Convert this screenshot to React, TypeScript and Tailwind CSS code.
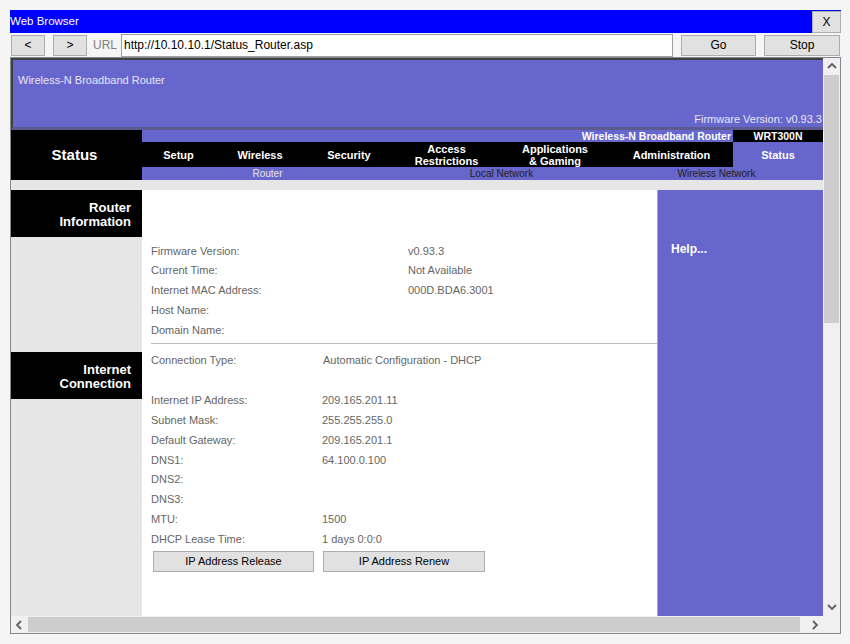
const routerRows: [string, string][] = [
  ['Firmware Version:', 'v0.93.3'],
  ['Current Time:', 'Not Available'],
  ['Internet MAC Address:', '000D.BDA6.3001'],
  ['Host Name:', ''],
  ['Domain Name:', ''],
]

const internetRows: [string, string][] = [
  ['Internet IP Address:', '209.165.201.11'],
  ['Subnet Mask:', '255.255.255.0'],
  ['Default Gateway:', '209.165.201.1'],
  ['DNS1:', '64.100.0.100'],
  ['DNS2:', ''],
  ['DNS3:', ''],
  ['MTU:', '1500'],
  ['DHCP Lease Time:', '1 days 0:0:0'],
]

function Chevron({ dir }: { dir: 'up' | 'down' | 'left' | 'right' }) {
  const pts = {
    up: '1,6 5,2 9,6',
    down: '1,2 5,6 9,2',
    left: '6,1 2,5 6,9',
    right: '3,1 7,5 3,9',
  }[dir]
  return (
    <svg width="10" height="10" viewBox="0 0 10 10">
      <polyline points={pts} fill="none" stroke="#606060" strokeWidth="1.8" />
    </svg>
  )
}

export default function App() {
  return (
    <div className="w-[850px] h-[644px] bg-[#f5f5f5] pt-[10px] pl-[10px] overflow-hidden font-['Liberation_Sans',Arial,sans-serif]">
      <div className="w-[831px] h-[624px] flex flex-col">
        {/* title bar */}
        <div className="h-[23px] bg-[#0000ff] flex items-start justify-between">
          <span className="text-white text-[11.5px] leading-[23px]">Web Browser</span>
          <button className="mt-px w-[29px] h-[22px] bg-[#e1e1e1] border border-[#adadad] text-[12px] leading-none text-black">X</button>
        </div>

        {/* toolbar */}
        <div className="h-[24px] flex items-center text-[12px]">
          <button className="ml-px w-[34px] h-[21px] bg-[#e1e1e1] border border-[#adadad]">&lt;</button>
          <button className="ml-[8px] w-[34px] h-[21px] bg-[#e1e1e1] border border-[#adadad]">&gt;</button>
          <span className="ml-[6px] w-[20px] text-center text-[#808080]">URL</span>
          <div className="ml-[8px] w-[552px] h-[23px] bg-white border border-[#a0a0a0] flex items-center pl-[2px] text-black">
            http://10.10.10.1/Status_Router.asp
          </div>
          <button className="ml-[8px] w-[75px] h-[21px] bg-[#e1e1e1] border border-[#adadad]">Go</button>
          <button className="ml-[8px] w-[76px] h-[21px] bg-[#e1e1e1] border border-[#adadad]">Stop</button>
        </div>

        {/* content frame */}
        <div className="flex-1 border border-[#828790] flex flex-col">
          <div className="flex-1 flex min-h-0">
            {/* page */}
            <div className="w-[812px] overflow-hidden flex flex-col">
              {/* header */}
              <div className="h-[72px] shrink-0 bg-[#6666cc] border-t-2 border-l-2 border-b-[3px] border-[#404040] border-b-[#5b5b8f] flex flex-col justify-between pb-px">
                <div className="pt-[13px] pl-[5px] text-[11px] leading-[14px] text-[#e6e6f5]">Wireless-N Broadband Router</div>
                <div className="text-right pr-px text-[11px] leading-[14px] text-[#e6e6f5] whitespace-nowrap">Firmware Version: v0.93.3</div>
              </div>

              {/* nav */}
              <div className="h-[50px] shrink-0 flex">
                <div className="w-[131px] bg-black text-white font-bold text-[15px] flex items-center justify-center pr-[4px]">Status</div>
                <div className="flex-1 flex flex-col">
                  <div className="h-[12px] flex font-bold text-[10.5px] leading-[12px] text-white">
                    <div className="flex-1 bg-[#6666cc] text-right pr-[2px]">Wireless-N Broadband Router</div>
                    <div className="w-[90px] bg-black text-center">WRT300N</div>
                  </div>
                  <div className="h-[25px] bg-black flex font-bold text-[11px] leading-[12px] text-white text-center">
                    <div className="w-[73px] flex items-center justify-center">Setup</div>
                    <div className="w-[90px] flex items-center justify-center">Wireless</div>
                    <div className="w-[88px] flex items-center justify-center">Security</div>
                    <div className="w-[107px] flex items-center justify-center">Access<br />Restrictions</div>
                    <div className="w-[110px] flex items-center justify-center">Applications<br />&amp; Gaming</div>
                    <div className="w-[123px] flex items-center justify-center">Administration</div>
                    <div className="w-[90px] bg-[#6666cc] flex items-center justify-center">Status</div>
                  </div>
                  <div className="h-[13px] bg-[#6666cc] flex text-[10px] leading-[13px] text-center">
                    <div className="w-[251px] text-[#e6e6e6]">Router</div>
                    <div className="w-[217px] text-[#222]">Local Network</div>
                    <div className="w-[213px] text-[#222]">Wireless Network</div>
                  </div>
                </div>
              </div>

              <div className="h-[10px] shrink-0 bg-[#e6e6e6]" />

              {/* body */}
              <div className="flex-1 flex">
                <div className="w-[131px] bg-[#e6e6e6] flex flex-col">
                  <div className="h-[47px] bg-black text-white font-bold text-[13px] leading-[14px] text-right pr-[11px] pt-[2px] flex flex-col justify-center">
                    <span>Router</span>
                    <span>Information</span>
                  </div>
                  <div className="h-[115px]" />
                  <div className="h-[47px] bg-black text-white font-bold text-[13px] leading-[14px] text-right pr-[11px] pt-[2px] flex flex-col justify-center">
                    <span>Internet</span>
                    <span>Connection</span>
                  </div>
                </div>

                <div className="w-[515px] bg-white pl-[9px] pt-[51px] text-[11px] text-[#666]">
                  {routerRows.map(([k, v]) => (
                    <div key={k} className="h-[19.75px] flex items-center">
                      <span className="w-[257px]">{k}</span>
                      <span>{v}</span>
                    </div>
                  ))}
                  <div className="mt-[3px] h-px bg-[#bdbdbd]" />
                  <div className="mt-[6px] h-[20px] flex items-center">
                    <span className="w-[172px]">Connection Type:</span>
                    <span>Automatic Configuration - DHCP</span>
                  </div>
                  <div className="h-[21px]" />
                  {internetRows.map(([k, v]) => (
                    <div key={k} className="h-[19.75px] flex items-center">
                      <span className="w-[171px]">{k}</span>
                      <span>{v}</span>
                    </div>
                  ))}
                  <div className="mt-[2px] ml-[2px] flex gap-[9px] text-black">
                    <button className="w-[161px] h-[21px] bg-[#e1e1e1] border border-[#adadad]">IP Address Release</button>
                    <button className="w-[162px] h-[21px] bg-[#e1e1e1] border border-[#adadad]">IP Address Renew</button>
                  </div>
                </div>

                <div className="w-[166px] bg-[#6666cc] border-l border-[#a0a0f0] pl-[13px] pt-[46px]">
                  <span className="text-white font-bold text-[12px] leading-[14px]">Help...</span>
                </div>
              </div>
            </div>

            {/* vertical scrollbar */}
            <div className="w-[17px] bg-[#f0f0f0] flex flex-col">
              <div className="h-[17px] flex items-center justify-center"><Chevron dir="up" /></div>
              <div className="mx-px h-[248px] bg-[#cdcdcd]" />
              <div className="flex-1" />
              <div className="h-[17px] flex items-center justify-center"><Chevron dir="down" /></div>
            </div>
          </div>

          {/* horizontal scrollbar */}
          <div className="h-[17px] flex">
            <div className="w-[812px] bg-[#f0f0f0] flex">
              <div className="w-[17px] flex items-center justify-center"><Chevron dir="left" /></div>
              <div className="w-[772px] my-px bg-[#cdcdcd]" />
              <div className="flex-1" />
              <div className="w-[17px] flex items-center justify-center"><Chevron dir="right" /></div>
            </div>
            <div className="w-[17px] bg-[#f0f0f0]" />
          </div>
        </div>
      </div>
    </div>
  )
}
